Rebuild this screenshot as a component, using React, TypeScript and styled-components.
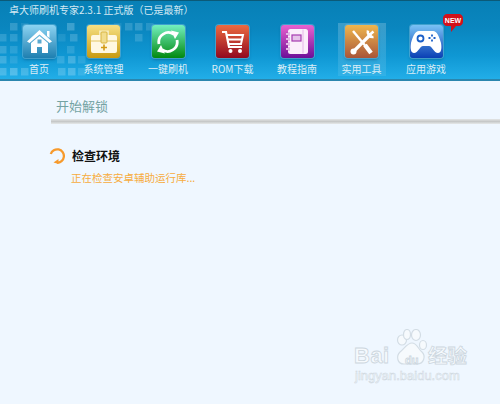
import React from "react";
import styled, { createGlobalStyle } from "styled-components";

const GlobalStyle = createGlobalStyle`
  html, body { margin: 0; padding: 0; background: #eff7ff; }
  body { font-family: "Noto Sans CJK SC", "Noto Sans", sans-serif; }
`;

const Page = styled.div`
  position: relative;
  width: 500px;
  height: 404px;
  overflow: hidden;
  background: #eff7ff;
`;

const Header = styled.header`
  position: relative;
  height: 78px;
  border-top: 1px solid #0b5a78;
  border-bottom: 2px solid #2a86ae;
  background: linear-gradient(180deg, #0780b6 0%, #0a86bf 35%, #0f97d3 70%, #22aee8 100%);
`;

const Pixels = styled.svg`
  position: absolute;
  left: 0;
  top: 0;
`;

const TitleText = styled.div`
  position: relative;
  height: 22px;
  padding-left: 9px;
  font-size: 10px;
  line-height: 18px;
  color: #d3e9f3;
  white-space: pre;
`;

const Nav = styled.nav`
  position: relative;
  display: flex;
  gap: 16.5px;
  padding-left: 15px;
`;

const NavItem = styled.div<{ $active?: boolean }>`
  position: relative;
  width: 48px;
  height: 53px;
  display: flex;
  flex-direction: column;
  align-items: center;
  padding-top: 2px;
  box-sizing: border-box;
  background: ${(p) =>
    p.$active ? "linear-gradient(180deg, rgba(255,255,255,0.2), rgba(255,255,255,0.08))" : "transparent"};
`;

const Tile = styled.div<{ $from: string; $to: string }>`
  width: 33px;
  height: 35px;
  border-radius: 3px;
  display: flex;
  align-items: center;
  justify-content: center;
  background: linear-gradient(180deg, ${(p) => p.$from} 0%, ${(p) => p.$to} 100%);
  box-shadow: 0 0 0 1px rgba(110, 185, 220, 0.55), 0 2px 3px rgba(0, 50, 90, 0.35);
`;

const NavLabel = styled.span`
  margin-top: 4px;
  font-size: 10px;
  line-height: 14px;
  color: #dceef7;
  white-space: nowrap;
`;

const NewBadge = styled.svg`
  position: absolute;
  left: 41px;
  top: -9px;
`;

const Section = styled.section`
  padding-top: 15px;
`;

const SectionTitle = styled.h2`
  margin: 0 0 0 56px;
  font-size: 13px;
  font-weight: 400;
  line-height: 20px;
  color: #74a3a3;
`;

const Divider = styled.div`
  height: 5px;
  margin: 3px 0 0 51px;
  background: linear-gradient(180deg, #e4e6e6 0%, #c6c8c8 50%, #e6e9ea 100%);
`;

const Task = styled.div`
  display: flex;
  gap: 7px;
  margin: 24px 0 0 49px;
`;

const TaskBody = styled.div`
  display: flex;
  flex-direction: column;
  gap: 7px;
`;

const TaskName = styled.div`
  font-size: 12px;
  font-weight: 700;
  line-height: 16px;
  color: #111;
`;

const TaskStatus = styled.div`
  margin-left: -1px;
  font-size: 10.5px;
  line-height: 14px;
  color: #f7ac3d;
`;

const Watermark = styled.div`
  position: absolute;
  left: 354px;
  top: 329px;
  width: 126px;
  height: 58px;
  color: #f6fafd;
  -webkit-text-stroke: 0.8px #ccd6de;
`;

const Brand = styled.span`
  position: absolute;
  left: 0;
  top: 16px;
  font-family: "Liberation Sans", sans-serif;
  font-size: 22px;
  font-weight: 700;
  line-height: 22px;
  letter-spacing: 0.5px;
`;

const BrandDu = styled.span`
  position: absolute;
  left: 51px;
  top: 25px;
  font-family: "Liberation Sans", sans-serif;
  font-size: 11px;
  font-weight: 700;
  line-height: 12px;
`;

const BrandCn = styled.span`
  position: absolute;
  left: 74px;
  top: 15px;
  font-size: 19.5px;
  font-weight: 700;
  line-height: 22px;
  white-space: nowrap;
`;

const BrandUrl = styled.span`
  position: absolute;
  left: 1px;
  top: 39px;
  font-family: "Liberation Sans", sans-serif;
  font-size: 13px;
  font-weight: 400;
  line-height: 15px;
  white-space: nowrap;
  -webkit-text-stroke: 0.5px #ccd6de;
`;

const Paw = styled.svg`
  position: absolute;
  left: 40px;
  top: 0;
`;

// decorative pixels behind the toolbar: [x, y, opacity]
const pixels: [number, number, number][] = [
  [10, 22, 0.16], [21, 22, 0.08], [67, 22, 0.2], [114, 22, 0.08], [125, 22, 0.14], [135, 22, 0.16], [146, 22, 0.12],
  [-1, 33, 0.14], [10, 33, 0.14], [58, 33, 0.08], [70, 33, 0.16], [135, 33, 0.14],
  [-1, 45, 0.16], [10, 45, 0.12], [67, 45, 0.12],
  [-1, 55, 0.18], [10, 55, 0.1], [57, 55, 0.14], [68, 55, 0.2], [78, 55, 0.1],
  [-1, 67, 0.2], [10, 67, 0.24], [21, 67, 0.18], [58, 67, 0.18], [68, 67, 0.22], [78, 67, 0.12],
];

const HomeIcon = () => (
  <svg width="27" height="27" viewBox="0 0 27 27">
    <path d="M13.5 2 L26 13.5 L23.5 15 L13.5 6.500 L3.500 15 L1 13.500 Z M21 3h2.500v7L21 8Z" fill="#fff" />
    <path d="M13.5 8 L22 15V25H16V19H11V25H5V15Z" fill="#fff" />
    <rect x="11.5" y="11.5" width="4" height="4" fill="#5aa9cf" />
  </svg>
);

const KitIcon = () => (
  <svg width="28" height="26" viewBox="0 0 28 26">
    <path d="M10 6V2.500h8V6" fill="none" stroke="#f7edc0" strokeWidth="1.800" />
    <rect x="1" y="6" width="26" height="18" rx="2" fill="#fff8e2" />
    <path d="M1 12h26" stroke="#e3c662" strokeWidth="1" />
    <rect x="11" y="3" width="6" height="11" rx="1" fill="#f2dd8e" stroke="#d9b642" strokeWidth="1" />
    <path d="M14 15.500v6M11 18.500h6" stroke="#d39a15" strokeWidth="1.600" />
  </svg>
);

const RefreshIcon = () => (
  <svg width="26" height="26" viewBox="0 0 26 26" fill="none">
    <path d="M4 15 A9.500 9.500 0 0 1 19 5.500" stroke="#fff" strokeWidth="2.800" />
    <path d="M22 11 A9.500 9.500 0 0 1 7 20.500" stroke="#fff" strokeWidth="2.800" />
    <path d="M16 1.500 L24 3.500 L20 10Z M10 24.500 L2 22.500 L6 16Z" fill="#fff" />
  </svg>
);

const CartIcon = () => (
  <svg width="26" height="26" viewBox="0 0 26 26" fill="none">
    <path d="M2 3h4l3 15h13" stroke="#fff" strokeWidth="2.200" />
    <path d="M7 6h16l-2 9H9M8 10.500h14" stroke="#fff" strokeWidth="2" />
    <circle cx="10.500" cy="22" r="2" fill="#fff" />
    <circle cx="20" cy="22" r="2" fill="#fff" />
  </svg>
);

const BookIcon = () => (
  <svg width="26" height="27" viewBox="0 0 26 27">
    <rect x="4" y="1" width="20" height="25" rx="2.500" fill="#fbeefb" />
    <path d="M19 1.500v24" stroke="#e6b6e8" strokeWidth="1" />
    <rect x="8" y="7" width="9" height="6" fill="#e6c3ea" stroke="#a63bb0" strokeWidth="1.200" />
    <path d="M2 6h4M2 11h4M2 16h4M2 21h4" stroke="#a63bb0" strokeWidth="2.600" />
    <path d="M2 6h4M2 11h4M2 16h4M2 21h4" stroke="#f7dff8" strokeWidth="1.300" />
  </svg>
);

const ToolsIcon = () => (
  <svg width="28" height="28" viewBox="0 0 28 28" fill="none">
    <path d="M5 3 L20 21" stroke="#fff" strokeWidth="2.400" />
    <path d="M17 17 L23 25" stroke="#fff" strokeWidth="4.400" />
    <path d="M23 6 L6 23" stroke="#fff" strokeWidth="3.200" />
    <path d="M25.500 3.500 L22 6.500 M20 2.500 A5 5 0 0 0 25.500 9" stroke="#fff" strokeWidth="2.600" />
    <circle cx="5.500" cy="23.500" r="3" fill="#fff" />
  </svg>
);

const PadIcon = () => (
  <svg width="32" height="26" viewBox="0 0 32 26">
    <path d="M9 2h14c4 0 6 5 8 12 1 6 0 10-3 10-4 0-6-7-9-7h-6c-3 0-5 7-9 7-3 0-4-4-3-10C3 7 5 2 9 2Z" fill="#fff" />
    <circle cx="10.500" cy="9.500" r="3" fill="none" stroke="#1a5fc8" strokeWidth="1.800" />
    <path d="M22 5.500v2M22 10.500v2M18.500 9h2M23.500 9h2" stroke="#1a5fc8" strokeWidth="1.800" />
  </svg>
);

const navItems = [
  { label: "首页", from: "#8cd3f2", to: "#1e7fb0", icon: <HomeIcon /> },
  { label: "系统管理", from: "#f6e084", to: "#c99a10", icon: <KitIcon /> },
  { label: "一键刷机", from: "#73f0c0", to: "#02890f", icon: <RefreshIcon /> },
  { label: "ROM下载", from: "#ec6a40", to: "#92091f", icon: <CartIcon /> },
  { label: "教程指南", from: "#ea62cf", to: "#6d0f98", icon: <BookIcon /> },
  { label: "实用工具", from: "#efb64c", to: "#a9553a", icon: <ToolsIcon />, active: true },
  { label: "应用游戏", from: "#79c2f5", to: "#0a3fb4", icon: <PadIcon />, isNew: true },
];

const App: React.FC = () => {
  return (
    <Page>
      <GlobalStyle />
      <Header>
        <Pixels width="170" height="78">
          {pixels.map(([x, y, o]) => (
            <rect key={`${x}-${y}`} x={x} y={y} width="7.500" height="7.500" fill="#bfe6f8" opacity={o * 1.4} />
          ))}
        </Pixels>
        <TitleText>卓大师刷机专家2.3.1 正式版（已是最新）</TitleText>
        <Nav>
          {navItems.map((item) => (
            <NavItem key={item.label} $active={item.active}>
              <Tile $from={item.from} $to={item.to}>
                {item.icon}
              </Tile>
              <NavLabel>{item.label}</NavLabel>
              {item.isNew && (
                <NewBadge width="20" height="18" viewBox="0 0 20 18">
                  <path d="M4 0h12c2 0 4 2 4 4v4c0 2-2 4-4 4h-3l-5 6v-6H4c-2 0-4-2-4-4V4c0-2 2-4 4-4Z" fill="#d3111a" />
                  <text x="10" y="9" textAnchor="middle" fontFamily="Liberation Sans" fontSize="7" fontWeight="700" fill="#fff">
                    NEW
                  </text>
                </NewBadge>
              )}
            </NavItem>
          ))}
        </Nav>
      </Header>
      <Section>
        <SectionTitle>开始解锁</SectionTitle>
        <Divider />
        <Task>
          <svg width="16" height="16" viewBox="0 0 16 16" fill="none">
            <path d="M1.800 6 A6.700 6.700 0 1 1 8 14.700" stroke="#f79a2c" strokeWidth="2.300" />
            <path d="M4.500 14.500 L9.500 11 L9.500 16Z" fill="#f79a2c" />
          </svg>
          <TaskBody>
            <TaskName>检查环境</TaskName>
            <TaskStatus>正在检查安卓辅助运行库...</TaskStatus>
          </TaskBody>
        </Task>
      </Section>
      <Watermark>
        <Paw width="36" height="38" viewBox="0 0 36 38">
          <g fill="#f6fafd" stroke="#d3dde5" strokeWidth="1.200">
            <ellipse cx="8" cy="11" rx="4.500" ry="5" />
            <ellipse cx="13" cy="5.500" rx="3.500" ry="5" />
            <ellipse cx="22" cy="6" rx="4.500" ry="5.500" />
            <ellipse cx="29" cy="16" rx="3.500" ry="4.500" />
            <path d="M18 14c5 0 6 6 10 9 4 4 2 12-5 12H10c-7 0-8-8-4-12 4-3 7-9 12-9Z" />
          </g>
        </Paw>
        <Brand>Bai</Brand>
        <BrandDu>du</BrandDu>
        <BrandCn>经验</BrandCn>
        <BrandUrl>jingyan.baidu.com</BrandUrl>
      </Watermark>
    </Page>
  );
};

export default App;
